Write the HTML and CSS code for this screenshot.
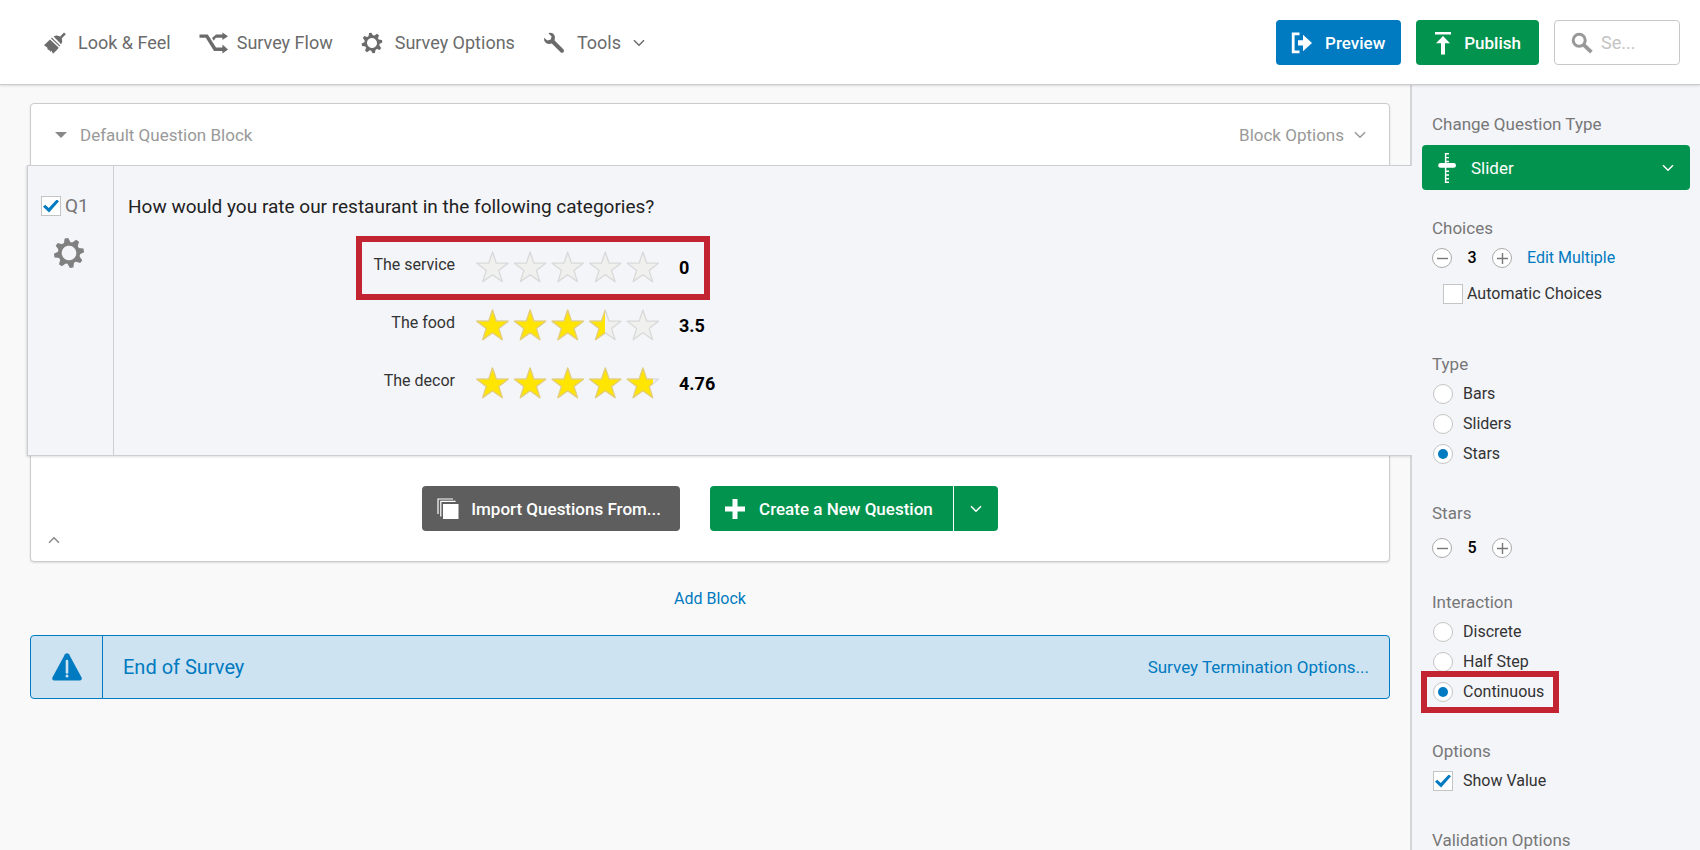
FILE: index.html
```html
<!DOCTYPE html>
<html lang="en">
<head>
<meta charset="utf-8">
<title>Survey Builder</title>
<link rel="stylesheet" href="styles.css">
</head>
<body>
<svg class="defs" aria-hidden="true">
  <defs>
    <symbol id="chevron" viewBox="0 0 12 8"><path d="M1 1.2 6 6.2 11 1.2" fill="none" stroke="currentColor" stroke-width="1.5"/></symbol>
    <symbol id="gear" viewBox="0 0 32 32">
      <g transform="rotate(-10 16 16)" fill="currentColor">
        <circle cx="16" cy="16" r="9.2" fill="none" stroke="currentColor" stroke-width="3.8"/>
        <path id="tooth" d="M12.6 6 14.2 1h3.6L19.4 6z"/>
        <use href="#tooth" transform="rotate(45 16 16)"/>
        <use href="#tooth" transform="rotate(90 16 16)"/>
        <use href="#tooth" transform="rotate(135 16 16)"/>
        <use href="#tooth" transform="rotate(180 16 16)"/>
        <use href="#tooth" transform="rotate(225 16 16)"/>
        <use href="#tooth" transform="rotate(270 16 16)"/>
        <use href="#tooth" transform="rotate(315 16 16)"/>
      </g>
    </symbol>
    <path id="star" d="M16 1 19.8 12.2 31.6 12.2 22.2 19.4 25.8 30.6 16 23.8 6.2 30.6 9.8 19.4 .4 12.2 12.2 12.2z" stroke-width="1.3" stroke-linejoin="round"/>
    <g id="stars">
      <use href="#star"/><use href="#star" x="37.6"/><use href="#star" x="75.2"/><use href="#star" x="112.8"/><use href="#star" x="150.4"/>
    </g>
    <clipPath id="clip-half"><rect width="130" height="34"/></clipPath>
    <clipPath id="clip-most"><rect width="178" height="34"/></clipPath>
  </defs>
</svg>

<header class="topbar">
  <nav class="nav">
    <a class="nav-item nav-look" href="#">
      <svg width="22" height="22" viewBox="0 0 22 22" fill="currentColor"><path d="M20 .4 21.8 2.2 16.6 7.6 15 5.8z"/><path d="M9.6 4.4 12 3.6Q15 3.4 16.8 5.2T18.2 9.8L17.2 12.2z"/><path d="M7.8 5.6 16.3 13.7 15.5 14.5 7 6.4z"/><path d="M6 7.4 14.6 15.4 13.8 17 9 21.8 7.4 18.6 6.8 20 4.8 17.6 4 18.2 3.2 15.6 0 13.2z"/></svg>
      <span>Look &amp; Feel</span>
    </a>
    <a class="nav-item nav-flow" href="#">
      <svg width="30" height="22" viewBox="0 0 30 22" fill="currentColor"><path d="M.5 2.4H8.8L17 15.6H23.4V12.6L29 17.4 23.4 21.4V19H15L6.8 5.8H.5z"/><path d="M17 2.4H23.4V.4L29 4.2 23.4 8V5.8H16.8L14.8 8.8 13 6z"/></svg>
      <span>Survey Flow</span>
    </a>
    <a class="nav-item nav-options" href="#">
      <svg width="22" height="22"><use href="#gear"/></svg>
      <span>Survey Options</span>
    </a>
    <a class="nav-item nav-tools" href="#">
      <svg width="22" height="22" viewBox="0 0 22 22"><path fill="currentColor" d="M6.4.8Q9.6.4 11.2 2.8 12.8 5.4 11.6 8.4L20.6 17.4Q21.6 18.8 20.4 20.2 19 21.2 17.6 20.2L8.8 11.6Q5.4 12.6 3 11 .6 9 1 5.8L4.4 8.6 7.8 7.6 8.6 4.6 5.6 1.6z"/></svg>
      <span>Tools</span>
      <svg class="chev" width="12" height="8"><use href="#chevron"/></svg>
    </a>
  </nav>
  <div class="actions">
    <button class="btn btn-blue" type="button">
      <svg width="22" height="22" viewBox="0 0 22 22"><path d="M8.5 1.8H2.2V19.8H8.5" fill="none" stroke="#fff" stroke-width="2.8"/><path d="M7 8.2H12V2.8L21 11 12 19.2V13.6H7z" fill="#fff"/></svg>
      Preview
    </button>
    <button class="btn btn-green" type="button">
      <svg width="18" height="24" viewBox="0 0 18 24" fill="#fff"><path d="M1 1H17V3.4H1zM9 5 16 12.2H11V23.4H7V12.2H2z"/></svg>
      Publish
    </button>
    <label class="search">
      <svg width="22" height="22" viewBox="0 0 22 22" fill="none" stroke="#999"><circle cx="8.2" cy="8.2" r="6" stroke-width="3"/><path d="M12.8 12.8 20.4 20.2" stroke-width="3.8"/></svg>
      <input type="text" placeholder="Se..." aria-label="Search">
    </label>
  </div>
</header>

<div class="workspace">
  <main class="canvas">
    <section class="block">
      <div class="block-head">
        <button class="plain block-title" type="button"><span class="triangle"></span>Default Question Block</button>
        <button class="plain block-options" type="button">Block Options <svg width="12" height="8"><use href="#chevron"/></svg></button>
      </div>
      <article class="question">
        <div class="question-side">
          <label class="question-id"><input class="check" type="checkbox" checked>Q1</label>
          <button class="plain gear" type="button" aria-label="Question settings"><svg width="32" height="32"><use href="#gear"/></svg></button>
        </div>
        <div class="question-body">
          <h1 class="question-text">How would you rate our restaurant in the following categories?</h1>
          <div class="ratings">
            <div class="rating marked">
              <span class="rating-label">The service</span>
              <svg class="star-row" role="img" aria-label="0 stars" width="184" height="34"><use class="star-off" href="#stars" x="1.5"/></svg>
              <b class="rating-value">0</b>
            </div>
            <div class="rating">
              <span class="rating-label">The food</span>
              <svg class="star-row" role="img" aria-label="3.5 stars" width="184" height="34"><use class="star-off" href="#stars" x="1.5"/><g clip-path="url(#clip-half)"><use class="star-on" href="#stars" x="1.5"/></g></svg>
              <b class="rating-value">3.5</b>
            </div>
            <div class="rating">
              <span class="rating-label">The decor</span>
              <svg class="star-row" role="img" aria-label="4.76 stars" width="184" height="34"><use class="star-off" href="#stars" x="1.5"/><g clip-path="url(#clip-most)"><use class="star-on" href="#stars" x="1.5"/></g></svg>
              <b class="rating-value">4.76</b>
            </div>
          </div>
        </div>
      </article>
      <div class="block-foot">
        <button class="btn btn-gray" type="button">
          <svg width="22" height="22" viewBox="0 0 22 22"><path d="M1 16V1H16M3.8 18.6V3.4H18.6" fill="none" stroke="#fff" stroke-width="1.2"/><path d="M6 6H21.5V21H6z" fill="#fff"/></svg>
          Import Questions From...
        </button>
        <div class="split">
          <button class="btn btn-green" type="button">
            <svg width="20" height="20" viewBox="0 0 20 20"><path d="M10 0V20M0 10H20" stroke="#fff" stroke-width="5"/></svg>
            Create a New Question
          </button>
          <button class="btn btn-green split-more" type="button" aria-label="More question types"><svg width="12" height="8"><use href="#chevron"/></svg></button>
        </div>
        <button class="plain collapse" type="button" aria-label="Collapse block"><svg width="12" height="8"><use href="#chevron"/></svg></button>
      </div>
    </section>
    <a class="link add-block" href="#">Add Block</a>
    <section class="end">
      <div class="end-icon"><svg width="30" height="28" viewBox="0 0 30 28"><path d="M13 1.2Q15-.6 17 1.2L29.6 24.6Q30.2 27.4 28 27.6H2Q-.2 27.4.4 24.6z" fill="#007ac0"/><path d="M15 8V19.4" stroke="#cee3f1" stroke-width="2.6" stroke-linecap="round"/><circle cx="15" cy="23" r="1.5" fill="#cee3f1"/></svg></div>
      <h2 class="end-title">End of Survey</h2>
      <a class="link end-link" href="#">Survey Termination Options...</a>
    </section>
  </main>

  <aside class="sidebar">
    <section class="group group-type">
      <h3>Change Question Type</h3>
      <button class="btn btn-green type-picker" type="button">
        <svg width="18" height="32" viewBox="0 0 18 32" fill="none" stroke="#fff"><path d="M7.6 1V31M7 1.7H11M7 5.6H11M7 9.5H11M7 19.3H11M7 23H11M7 26.7H11M7 30.3H11" stroke-width="1.4"/><path d="M2.6 13.4H15.6" stroke-width="4.8" stroke-linecap="round"/></svg>
        <span>Slider</span>
        <svg class="chev" width="12" height="8"><use href="#chevron"/></svg>
      </button>
    </section>
    <section class="group group-choices">
      <h3>Choices</h3>
      <div class="counter">
        <button class="round" type="button" aria-label="Fewer choices"><svg width="11" height="11"><path d="M0 5.5H11" stroke="#777" stroke-width="1.4"/></svg></button>
        <span class="count">3</span>
        <button class="round" type="button" aria-label="More choices"><svg width="11" height="11"><path d="M0 5.5H11M5.5 0V11" stroke="#777" stroke-width="1.4"/></svg></button>
        <a class="link" href="#">Edit Multiple</a>
      </div>
      <label class="auto"><input class="check" type="checkbox">Automatic Choices</label>
    </section>
    <section class="group group-options">
      <h3>Type</h3>
      <label class="option"><input class="radio" type="radio" name="type">Bars</label>
      <label class="option"><input class="radio" type="radio" name="type">Sliders</label>
      <label class="option"><input class="radio" type="radio" name="type" checked>Stars</label>
    </section>
    <section class="group group-stars">
      <h3>Stars</h3>
      <div class="counter">
        <button class="round" type="button" aria-label="Fewer stars"><svg width="11" height="11"><path d="M0 5.5H11" stroke="#777" stroke-width="1.4"/></svg></button>
        <span class="count">5</span>
        <button class="round" type="button" aria-label="More stars"><svg width="11" height="11"><path d="M0 5.5H11M5.5 0V11" stroke="#777" stroke-width="1.4"/></svg></button>
      </div>
    </section>
    <section class="group group-options">
      <h3>Interaction</h3>
      <label class="option"><input class="radio" type="radio" name="interaction">Discrete</label>
      <label class="option"><input class="radio" type="radio" name="interaction">Half Step</label>
      <label class="option marked"><input class="radio" type="radio" name="interaction" checked>Continuous</label>
    </section>
    <section class="group group-options">
      <h3>Options</h3>
      <label class="option"><input class="check" type="checkbox" checked>Show Value</label>
    </section>
    <section class="group group-last">
      <h3>Validation Options</h3>
    </section>
  </aside>
</div>
</body>
</html>
```

FILE: styles.css
```css
* { box-sizing: border-box; }

body {
  margin: 0;
  min-height: 100vh;
  display: flex;
  flex-direction: column;
  font: 16px/20px Roboto, "Liberation Sans", sans-serif;
  color: #333;
  background: #f9f9f9;
}

h1, h2, h3 { margin: 0; font-weight: 400; }
a { text-decoration: none; color: inherit; }
button, input { font: inherit; color: inherit; margin: 0; }
button { cursor: pointer; }
svg { flex: none; display: block; }
.defs { position: absolute; width: 0; height: 0; }
.link { color: #007ac0; }

.plain {
  display: flex;
  align-items: center;
  padding: 0;
  border: 0;
  background: none;
}

/* Top bar */
.topbar {
  position: relative;
  z-index: 2;
  display: flex;
  justify-content: space-between;
  align-items: center;
  padding: 20px 20px 19px 44px;
  background: #fff;
  border-bottom: 1px solid #ccc;
  box-shadow: 0 1px 2px rgba(0, 0, 0, .12);
}
.nav { display: flex; gap: 28px; color: #6b6b6b; font-size: 18px; }
.nav-item { display: flex; align-items: center; gap: 12px; }
.nav-flow { gap: 8px; }
.actions { display: flex; gap: 15px; }

.btn {
  display: flex;
  align-items: center;
  height: 45px;
  padding: 0 16px 0 15px;
  gap: 12px;
  border: 0;
  border-radius: 4px;
  color: #fff;
  font-size: 17px;
  font-weight: 500;
  white-space: nowrap;
}
.btn-blue { background: #007ac0; }
.btn-green { background: #02944e; }
.btn-gray { background: #5e5e5e; }
.actions .btn-green { padding: 0 18px; }

.search {
  display: flex;
  align-items: center;
  gap: 8px;
  width: 126px;
  height: 45px;
  padding: 0 16px;
  border: 1px solid #c8c8c8;
  border-radius: 4px;
  background: #fff;
}
.search input {
  min-width: 0;
  width: 100%;
  padding: 0;
  border: 0;
  outline: 0;
  font-size: 18px;
}
.search input::placeholder { color: #c4c4c4; }

/* Workspace */
.workspace { flex: 1; display: flex; }
.canvas {
  flex: 1;
  min-width: 0;
  display: flex;
  flex-direction: column;
  padding: 18px 20px 20px 30px;
}
.block {
  background: #fff;
  border: 1px solid #ccc;
  border-radius: 4px;
  box-shadow: 0 1px 2px rgba(0, 0, 0, .12);
}
.block-head {
  display: flex;
  justify-content: space-between;
  padding: 21px 23px 20px 24px;
  color: #999;
  font-size: 17px;
}
.block-title { gap: 13px; }
.block-options { gap: 10px; }
.triangle {
  border: 6px solid transparent;
  border-top-color: #888;
  border-bottom: 0;
}

.question {
  position: relative;
  z-index: 1;
  display: flex;
  min-height: 291px;
  margin: 0 -23px 0 -4px;
  background: #f4f5f9;
  border: 1px solid #cdced2;
  border-right: 0;
  box-shadow: -1px 1px 2px rgba(0, 0, 0, .12);
  clip-path: inset(-4px 0 -4px -4px);
}
.question-side {
  width: 86px;
  display: flex;
  flex-direction: column;
  align-items: flex-start;
  gap: 21px;
  padding: 30px 0 0 13px;
  border-right: 1px solid #cdced2;
  color: #777;
}
.question-id { display: flex; align-items: center; gap: 4px; font-size: 19px; }
.gear { color: #808080; margin-left: 12px; }
.question-body { padding: 31px 14px; }
.question-text { font-size: 19px; line-height: 20px; color: #222; }

.ratings { display: inline-flex; flex-direction: column; padding: 22px 0 0 228px; }
.rating {
  position: relative;
  display: grid;
  grid-template-columns: 99px 184px auto;
  align-items: center;
  column-gap: 20px;
  height: 58px;
}
.rating:first-child { width: 354px; }
.rating-label { text-align: right; padding-bottom: 6px; }
.rating-value { font-size: 18px; color: #000; font-weight: 700; }
.star-off { fill: #f0f0ee; stroke: #d9d9d9; }
.star-on { fill: #ffe500; stroke: #e6cf72; }

.marked { position: relative; }
.marked::after {
  content: "";
  position: absolute;
  border: 6px solid #c32432;
  pointer-events: none;
}
.rating.marked::after { inset: -3px 0; }

.block-foot {
  display: grid;
  grid-template-columns: 1fr auto auto 1fr;
  column-gap: 30px;
  row-gap: 5px;
  padding: 30px 17px 17px;
}
.btn-gray { grid-column: 2; padding-right: 19px; }
.split { display: flex; gap: 1px; }
.split .btn:first-child { border-radius: 4px 0 0 4px; padding-right: 20px; gap: 14px; }
.split .split-more { border-radius: 0 4px 4px 0; padding: 0 16px; }
.collapse {
  grid-column: 1;
  grid-row: 2;
  justify-self: start;
  color: #888;
}
.collapse svg { transform: rotate(180deg); }

.add-block { align-self: center; margin: 27px 0 26px; }

.end {
  display: flex;
  align-items: stretch;
  height: 64px;
  border: 1px solid #007ac0;
  border-radius: 4px;
  background: #cee3f1;
}
.end-icon {
  display: flex;
  align-items: center;
  justify-content: center;
  width: 72px;
  border-right: 1px solid #007ac0;
}
.end-title { flex: 1; align-self: center; padding-left: 20px; font-size: 20px; color: #007ac0; }
.end-link { align-self: center; padding-right: 20px; font-size: 17px; }

/* Sidebar */
.sidebar {
  flex: none;
  width: 290px;
  padding: 29px 10px 0;
  background: #f4f5f9;
  border-left: 2px solid #d3d5d9;
}
.group { padding: 0 10px 34px; }
.group h3 { font-size: 17px; line-height: 20px; color: #777; }
.group-type { padding-bottom: 28px; }
.group-choices { padding-bottom: 45px; }
.group-stars { padding-bottom: 29px; }
.group-last { padding-bottom: 0; }

.type-picker { width: calc(100% + 20px); margin: 11px -10px 0; gap: 15px; padding: 0 16px; font-weight: 400; }
.type-picker .chev { margin-left: auto; }

.counter { display: flex; align-items: center; height: 30px; margin-top: 5px; }
.group-stars .counter { margin-top: 10px; }
.round {
  display: flex;
  align-items: center;
  justify-content: center;
  width: 20px;
  height: 20px;
  padding: 0;
  border: 1px solid #aaa;
  border-radius: 50%;
  background: #fff;
}
.count { width: 40px; text-align: center; color: #000; font-weight: 500; }
.counter .link { margin-left: 15px; }

.auto { display: flex; align-items: center; gap: 4px; height: 30px; margin: 6px 0 0 11px; }
.option { display: flex; align-items: center; gap: 10px; width: fit-content; height: 30px; padding-left: 1px; }
.group h3 + .option { margin-top: 5px; }
.option.marked::after { inset: -6px -15px -6px -11px; }

.check, .radio {
  flex: none;
  appearance: none;
  display: grid;
  place-content: center;
  width: 20px;
  height: 20px;
  border: 1px solid #c4c4c4;
  background: #fff;
}
.radio { border-radius: 50%; }
.radio:checked::before {
  content: "";
  width: 10px;
  height: 10px;
  border-radius: 50%;
  background: #007ac0;
}
.check:checked::before {
  content: "";
  width: 16px;
  height: 13px;
  background: #007ac0;
  clip-path: polygon(0 55%, 14% 40%, 36% 66%, 86% 0, 100% 14%, 38% 100%);
}
```
